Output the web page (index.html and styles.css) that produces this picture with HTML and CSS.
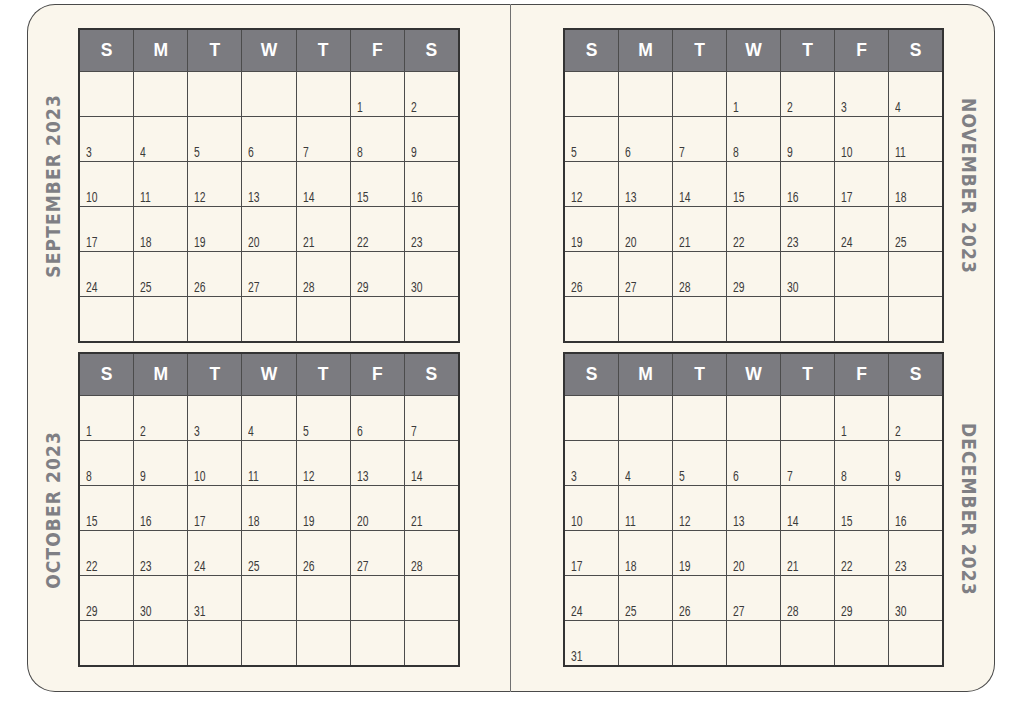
FILE: index.html
```html
<!DOCTYPE html>
<html lang="en">
<head>
  <meta charset="UTF-8">
  <title>Planner 2023</title>
  <link rel="stylesheet" href="styles.css">
</head>
<body>
  <div class="spread">
    <div class="page page-left">
      <div class="month">
        <div class="month-label">SEPTEMBER 2023</div>
        <div class="cal" data-start="5" data-days="30"></div>
      </div>
      <div class="month">
        <div class="month-label">OCTOBER 2023</div>
        <div class="cal" data-start="0" data-days="31"></div>
      </div>
    </div>
    <div class="page page-right">
      <div class="month">
        <div class="cal" data-start="3" data-days="30"></div>
        <div class="month-label">NOVEMBER 2023</div>
      </div>
      <div class="month">
        <div class="cal" data-start="5" data-days="31"></div>
        <div class="month-label">DECEMBER 2023</div>
      </div>
    </div>
  </div>

  <script>
    const dayNames = ['S', 'M', 'T', 'W', 'T', 'F', 'S'];

    document.querySelectorAll('.cal').forEach(function(cal) {
      const start = parseInt(cal.dataset.start);
      const days = parseInt(cal.dataset.days);

      dayNames.forEach(function(name) {
        const head = document.createElement('div');
        head.className = 'cal-head';
        head.textContent = name;
        cal.appendChild(head);
      });

      // 6 weeks, always
      for (let i = 0; i < 42; i++) {
        const cell = document.createElement('div');
        cell.className = 'cal-day';
        const day = i - start + 1;
        if (day >= 1 && day <= days) {
          const num = document.createElement('span');
          num.textContent = day;
          cell.appendChild(num);
        }
        cal.appendChild(cell);
      }
    });
  </script>
</body>
</html>
```

FILE: styles.css
```css
body {
  margin: 0;
  background: #ffffff;
  font-family: "Liberation Sans", Arial, sans-serif;
}

.spread {
  display: flex;
  width: 968px;
  height: 688px;
  margin: 4px 0 0 27px;
}

.page {
  width: 484px;
  flex: none;
  display: flex;
  flex-direction: column;
  gap: 9px;
  padding-top: 23px;
  box-sizing: border-box;
  background: #faf6ec;
  border: 1.5px solid #4a4a4a;
}

.page-left {
  border-radius: 28px 0 0 28px;
  border-right: 1px solid #707070;
}

.page-right {
  border-left: none;
  border-radius: 0 28px 28px 0;
  padding-left: 52px;
}

.month {
  display: flex;
  align-items: center;
}

.month-label {
  width: 50px;
  writing-mode: vertical-rl;
  text-align: center;
  font-family: "DejaVu Sans Condensed", "Liberation Sans", sans-serif;
  font-stretch: condensed;
  font-weight: bold;
  font-size: 19px;
  letter-spacing: 1.1px;
  color: #7f7f84;
  line-height: 50px;
}

.page-left .month-label {
  transform: rotate(180deg);
}

.cal {
  width: 382px;
  display: grid;
  grid-template-columns: repeat(7, 1fr);
  grid-template-rows: 41px repeat(6, 44px);
  gap: 1px;
  background: #4c4c4c;
  border: 2px solid #333333;
  box-sizing: border-box;
}

.cal-head {
  display: flex;
  align-items: center;
  justify-content: center;
  background: #7b7b80;
  color: #ffffff;
  font-weight: bold;
  font-size: 17.5px;
}

.cal-day {
  display: flex;
  align-items: flex-end;
  padding: 0 0 1px 6px;
  background: #faf6ec;
  font-size: 14px;
  color: #3a3a3a;
}

.cal-day span {
  display: inline-block;
  transform: scaleX(0.74);
  transform-origin: left bottom;
}
```
